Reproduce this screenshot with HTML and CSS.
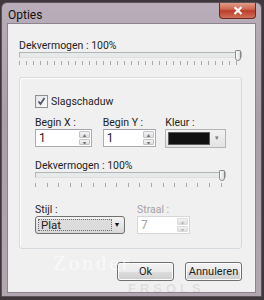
FILE: index.html
```html
<!DOCTYPE html>
<html lang="nl">
<head>
    <meta charset="UTF-8">
    <meta name="viewport" content="width=device-width, initial-scale=1.0">
    <title>Opties</title>
    <link rel="stylesheet" href="styles.css">
</head>
<body>
    <div class="window">
        <div class="titlebar">
            <span class="title">Opties</span>
            <button class="close" title="Sluiten">
                <svg class="close-icon" viewBox="0 0 10 9">
                    <path d="M1.5 1l7 7M8.5 1l-7 7"></path>
                </svg>
            </button>
        </div>

        <div class="client">
            <div class="label">Dekvermogen : 100%</div>
            <div class="slider">
                <div class="track"><span class="thumb"></span></div>
                <div class="ticks ticks-fine"></div>
            </div>

            <div class="group">
                <label class="check">
                    <span class="check-box">
                        <svg viewBox="0 0 9 9">
                            <path d="M1.5 4.5l2 2.5 4-6"></path>
                        </svg>
                    </span>
                    Slagschaduw
                </label>

                <div class="fields">
                    <div class="field field-x">
                        <div class="label">Begin X :</div>
                        <div class="spin">
                            <span class="spin-value">1</span>
                            <span class="spin-buttons">
                                <span class="spin-btn">&#9652;</span>
                                <span class="spin-btn">&#9662;</span>
                            </span>
                        </div>
                    </div>
                    <div class="field field-y">
                        <div class="label">Begin Y :</div>
                        <div class="spin">
                            <span class="spin-value">1</span>
                            <span class="spin-buttons">
                                <span class="spin-btn">&#9652;</span>
                                <span class="spin-btn">&#9662;</span>
                            </span>
                        </div>
                    </div>
                    <div class="field field-color">
                        <div class="label">Kleur :</div>
                        <div class="color-combo">
                            <span class="swatch"></span>
                            <span class="color-drop">&#9662;</span>
                        </div>
                    </div>
                </div>

                <div class="label label-opacity">Dekvermogen : 100%</div>
                <div class="slider">
                    <div class="track"><span class="thumb"></span></div>
                    <div class="ticks ticks-wide"></div>
                </div>

                <div class="fields fields-style">
                    <div class="field field-style">
                        <div class="label">Stijl :</div>
                        <div class="combo">
                            <span class="combo-value">Plat</span>
                            <span class="combo-arrow">&#9660;</span>
                        </div>
                    </div>
                    <div class="field field-radius disabled">
                        <div class="label">Straal :</div>
                        <div class="spin">
                            <span class="spin-value">7</span>
                            <span class="spin-buttons">
                                <span class="spin-btn">&#9652;</span>
                                <span class="spin-btn">&#9662;</span>
                            </span>
                        </div>
                    </div>
                </div>
            </div>

            <div class="buttons">
                <button class="button">Ok</button>
                <button class="button">Annuleren</button>
            </div>

            <div class="watermark">Zonder</div>
        </div>
        <div class="watermark watermark-bottom">FRSOLS</div>
    </div>
</body>
</html>
```

FILE: styles.css
```css
* {
    margin: 0;
    padding: 0;
    box-sizing: border-box;
}

body {
    width: 264px;
    height: 300px;
    overflow: hidden;
    background: #3e373c;
    font-family: Roboto, "Noto Sans", sans-serif;
    font-size: 10.5px;
    color: #1e1e1e;
}

.window {
    position: relative;
    width: 261px;
    height: 295px;
    margin: 2px 0 0 1px;
    padding: 0 5px 4px 5px;
    background: linear-gradient(#b8adb8, #aa9eaa 40%, #b2a7b1);
    border: 1px solid #5d545b;
    border-radius: 6px 6px 0 0;
    overflow: hidden;
}

.titlebar {
    height: 20px;
    display: flex;
    justify-content: space-between;
    align-items: flex-start;
}

.title {
    margin: 5px 0 0 1px;
    font-size: 12px;
    line-height: 14px;
    color: #111;
}

.close {
    width: 37px;
    height: 17px;
    margin-top: -1px;
    background: linear-gradient(#e4a493, #cf6650 45%, #bc3d28 55%, #d0705a);
    border: 1px solid #6e2a22;
    border-top: none;
    border-radius: 0 0 4px 4px;
    display: flex;
    align-items: center;
    justify-content: center;
}

.close-icon {
    width: 10px;
    height: 9px;
    stroke: #fff;
    stroke-width: 2.2;
    fill: none;
}

.client {
    position: relative;
    height: 270px;
    background: #f0f0f0;
    border: 1px solid #8c8290;
    padding: 0 13px 0 11px;
}

.label {
    line-height: 12px;
    white-space: nowrap;
}

.client > .label {
    margin-top: 16px;
}

.slider {
    width: 100%;
}

.track {
    position: relative;
    height: 6px;
    background: #e7eaea;
    border: 1px solid #b4b4b4;
    border-bottom-color: #e0e0e0;
    border-radius: 1px;
}

.thumb {
    position: absolute;
    right: 0;
    top: -3px;
    width: 6px;
    height: 11px;
    background: linear-gradient(90deg, #fdfdfd, #dcdcdc);
    border: 1px solid #8a8a8a;
    border-radius: 1px 1px 3px 3px;
}

.ticks {
    height: 4px;
    margin-top: 3px;
}

.ticks-fine {
    background: repeating-linear-gradient(90deg, #a8a8a8 0 1px, transparent 1px 7px);
}

.ticks-wide {
    margin-top: 5px;
    background: repeating-linear-gradient(90deg, #a8a8a8 0 1px, transparent 1px 11.6px);
}

.group {
    margin-top: 12px;
    height: 172px;
    padding: 17px 15px 0 15px;
    border: 1px solid #d5dadf;
    border-radius: 3px;
    box-shadow: inset 1px 1px 0 #fff;
}

.check {
    display: flex;
    align-items: center;
    gap: 3px;
    height: 13px;
}

.check-box {
    width: 13px;
    height: 13px;
    padding: 1px;
    border: 1px solid #8e8f8f;
    background: linear-gradient(135deg, #e3e4e6, #fbfbfb);
}

.check-box svg {
    width: 9px;
    height: 9px;
    stroke: #4d5766;
    stroke-width: 1.8;
    fill: none;
    display: block;
}

.fields {
    display: flex;
    margin-top: 9px;
}

.field-x {
    width: 57px;
    margin-right: 11px;
}

.field-y {
    width: 54px;
    margin-right: 9px;
}

.field-color {
    width: 61px;
}

.spin {
    display: flex;
    height: 18px;
    background: #fff;
    border: 1px solid #abadb3;
    border-top-color: #a0a3ab;
}

.spin-value {
    flex: 1;
    padding-left: 3px;
    line-height: 16px;
    font-size: 12px;
}

.spin-buttons {
    width: 11px;
    display: flex;
    flex-direction: column;
    gap: 1px;
    margin: 1px 1px 1px 0;
}

.spin-btn {
    flex: 1;
    font-size: 6px;
    line-height: 6px;
    text-align: center;
    color: #6b6b6b;
    background: linear-gradient(#f4f4f4, #dedede);
    border: 1px solid #c4c4c4;
    border-radius: 1px;
    overflow: hidden;
}

.color-combo {
    display: flex;
    height: 19px;
    padding: 2px;
    background: linear-gradient(#f2f2f2, #e3e3e3);
    border: 1px solid #b4b4b4;
}

.swatch {
    flex: 1;
    background: #111;
    border: 1px solid #5b5b5b;
}

.color-drop {
    width: 13px;
    font-size: 7px;
    line-height: 13px;
    text-align: center;
    color: #7a7a7a;
}

.label-opacity {
    margin-top: 12px;
}

.fields-style {
    margin-top: 17px;
}

.field-style {
    width: 90px;
    margin-right: 12px;
}

.field-radius {
    width: 53px;
}

.disabled .label,
.disabled .spin-value {
    color: #a3a3a3;
}

.disabled .spin {
    border-color: #d4d6da;
}

.disabled .spin-btn {
    color: #b8b8b8;
    border-color: #dadada;
}

.combo {
    display: flex;
    align-items: center;
    height: 18px;
    padding: 2px;
    background: linear-gradient(#f3f3f3, #e6e6e6 50%, #d8d8d8);
    border: 1px solid #707070;
    border-radius: 3px;
}

.combo-value {
    width: 74px;
    height: 12px;
    padding-left: 2px;
    line-height: 11px;
    font-size: 11.5px;
    border: 1px dotted #6f6f6f;
    background: #dcdcdc;
}

.combo-arrow {
    flex: 1;
    text-align: center;
    font-size: 7px;
    color: #111;
}

.buttons {
    display: flex;
    justify-content: flex-end;
    gap: 11px;
    margin-top: 13px;
}

.button {
    width: 57px;
    height: 19px;
    font-family: inherit;
    font-size: 11px;
    color: #1e1e1e;
    background: linear-gradient(#f2f2f2, #ebebeb 50%, #dddddd 50%, #cfcfcf);
    border: 1px solid #707070;
    border-radius: 3px;
    box-shadow: inset 0 0 0 1px #fcfcfc;
}

.watermark {
    position: absolute;
    left: 45px;
    top: 228px;
    font-family: "Liberation Serif", serif;
    font-size: 21px;
    line-height: 22px;
    letter-spacing: 3px;
    color: rgba(255, 255, 255, 0.6);
    pointer-events: none;
}

.watermark-bottom {
    left: 126px;
    top: 279px;
    font-family: "Liberation Sans", sans-serif;
    font-weight: bold;
    font-size: 13px;
    line-height: 14px;
    letter-spacing: 4px;
    color: rgba(110, 110, 110, 0.14);
}
```
